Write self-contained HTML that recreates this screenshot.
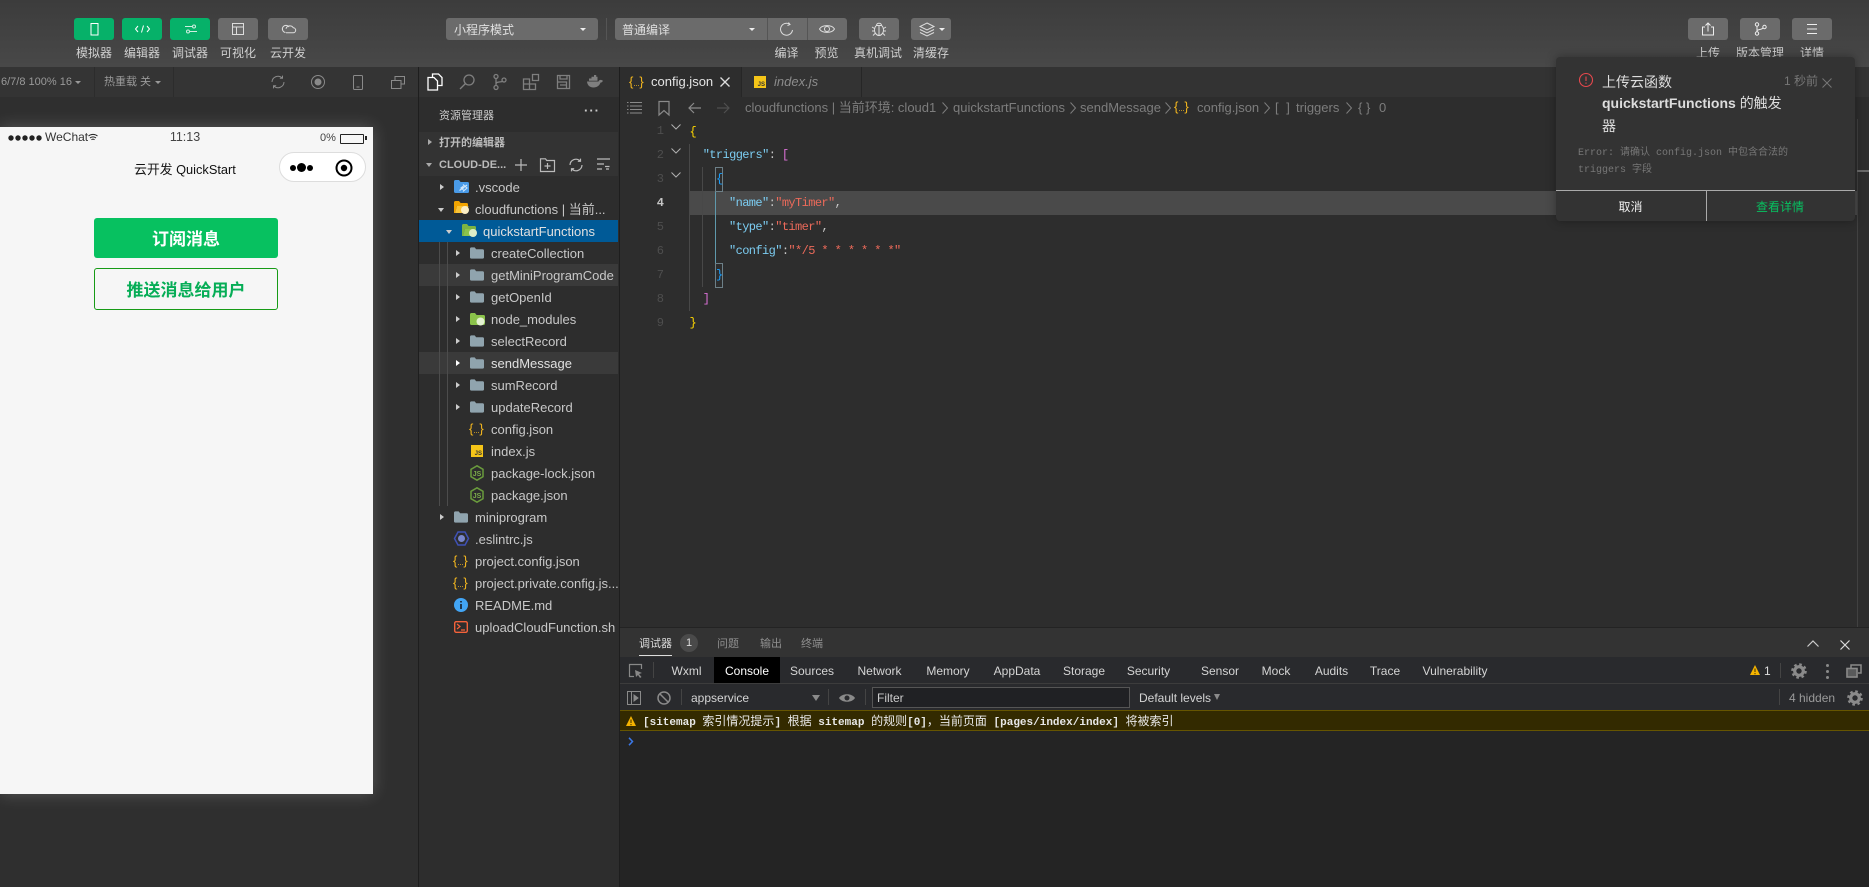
<!DOCTYPE html>
<html lang="zh"><head><meta charset="utf-8"><title>WeChat DevTools</title>
<style>
html,body{margin:0;padding:0;width:1869px;height:887px;overflow:hidden;background:#2f2f2f}
body{position:relative;font-family:"Liberation Sans","Noto Sans CJK SC",sans-serif;font-size:12px;color:#ccc}
.a,.t,.b,svg.i{position:absolute}
.t{white-space:nowrap}
.c{transform:translateX(-50%)}
.lab{top:45px;line-height:16px;color:#d0d0d0;font-size:12px}
.b{top:18px;height:22px;width:40px;border-radius:3px;background:#6b6b6b}
.g{background:#06b169}
.row{position:absolute;left:420px;width:198px;height:22px;line-height:23px;font-size:13px;color:#c8c8c8;white-space:nowrap}
.row span{position:absolute;top:0}
.r,.d{position:absolute;width:0;height:0}
.r{border-left:4px solid #ccc;border-top:3.5px solid transparent;border-bottom:3.5px solid transparent;top:7.5px}
.d{border-top:4px solid #ccc;border-left:3.5px solid transparent;border-right:3.5px solid transparent;top:9.5px}
.sm{border-top-width:3px;border-left-width:3px;border-right-width:3px}
svg.i{overflow:visible;fill:none}
.js{position:absolute;width:13px;height:13px;background:#f5c518;color:#333;font:bold 6px/18px "Liberation Sans",sans-serif;text-align:right;padding-right:1px;box-sizing:border-box}
.cur{position:absolute;color:#f5b81f;font:normal 13px/22px "Liberation Sans",sans-serif}
.cur i{font:normal 8px/22px "Liberation Sans",sans-serif;letter-spacing:-.2px}
.code{position:absolute;font:12px/24px "Liberation Mono",monospace;letter-spacing:-.6px;white-space:pre;height:24px}
.ln{position:absolute;left:640px;width:24px;text-align:right;color:#4e4e4e;font:12px/24px "Liberation Mono",monospace}
.k{color:#7ccdf2}.s{color:#ec6a5a}.w{color:#c8c8c8}
.bc{position:absolute;top:96px;line-height:23px;font-size:13px;color:#7d7d7d;white-space:nowrap}
.dv{position:absolute;top:662px;line-height:18px;font-size:12px;color:#d4d4d4;white-space:nowrap;transform:translateX(-50%)}
.z{font-size:12px;font-weight:normal}
</style></head><body>

<svg width="0" height="0" style="position:absolute"><defs>
<symbol id="fo" viewBox="0 0 15 12"><path d="M0 1.500C0 .6.600 0 1.500 0H5l1.600 2H13.500c.9 0 1.500.6 1.500 1.500v7c0 .9-.6 1.500-1.500 1.500h-12C.6 12 0 11.400 0 10.500z" fill="#90a4ae"/></symbol>
<symbol id="nd" viewBox="0 0 14 16"><path d="M7 .8l6 3.500v7.400l-6 3.500-6-3.500V4.300z" fill="none" stroke="#6a9b3d" stroke-width="1.500"/><text x="7" y="11" font-size="7" font-weight="bold" text-anchor="middle" fill="#7bac4a" font-family="Liberation Sans">JS</text></symbol>
<symbol id="gear" viewBox="0 0 16 16"><circle cx="8" cy="8" r="4.300" fill="none" stroke="#8a8a8a" stroke-width="3.200"/><circle cx="8" cy="8" r="6.600" fill="none" stroke="#8a8a8a" stroke-width="2.400" stroke-dasharray="2.600 2.583"/></symbol>
</defs></svg>

<!-- top toolbar -->
<div class="a" style="left:0;top:0;width:1869px;height:67px;background:linear-gradient(#3c3c3c,#484848)"></div>
<div class="b g" style="left:74px"></div><div class="b g" style="left:122px"></div><div class="b g" style="left:170px"></div>
<div class="b" style="left:218px"></div><div class="b" style="left:268px"></div>
<svg class="i" style="left:88px;top:23px" width="12" height="13"><rect x="3" y=".5" width="7" height="11.500" stroke="#fff"/></svg>
<svg class="i" style="left:134px;top:23px" width="17" height="12" stroke="#fff"><path d="M4 3L1.500 6 4 9M13 3l2.500 3L13 9M9.500 2.500L7.500 9.500"/></svg>
<svg class="i" style="left:184px;top:23px" width="13" height="12" stroke="#cfeee0"><path d="M1 3.500h7M6 8.500h7"/><circle cx="10" cy="3.500" r="1.500"/><circle cx="4" cy="8.500" r="1.500"/></svg>
<svg class="i" style="left:232px;top:23px" width="12" height="12" stroke="#ddd"><path d="M.5.500h11v11H.5zM.5 4h11M4.500 4v7.500"/></svg>
<svg class="i" style="left:281px;top:24px" width="15" height="11" stroke="#ddd"><path d="M4.500 8.500a3.600 3.600 0 1 1 3.500-5.500"/><path d="M5 8.800h7a2.500 2.500 0 0 0 .3-5 4 4 0 0 0-7.300 1"/></svg>
<div class="t lab c" style="left:94px">模拟器</div><div class="t lab c" style="left:142px">编辑器</div><div class="t lab c" style="left:190px">调试器</div><div class="t lab c" style="left:238px">可视化</div><div class="t lab c" style="left:288px">云开发</div>

<div class="a" style="left:446px;top:18px;width:152px;height:22px;border-radius:3px;background:#6b6b6b"></div>
<div class="t" style="left:454px;top:18px;line-height:24px;color:#e0e0e0;font-size:12px">小程序模式</div>
<div class="d sm" style="left:580px;top:28px;border-top-color:#eee"></div>
<div class="a" style="left:606px;top:18px;width:1px;height:22px;background:#555"></div>
<div class="a" style="left:615px;top:18px;width:232px;height:22px;border-radius:3px;background:#6b6b6b"></div>
<div class="a" style="left:767px;top:18px;width:1px;height:22px;background:#555"></div>
<div class="a" style="left:807px;top:18px;width:1px;height:22px;background:#555"></div>
<div class="t" style="left:622px;top:18px;line-height:24px;color:#e0e0e0;font-size:12px">普通编译</div>
<div class="d sm" style="left:749px;top:28px;border-top-color:#eee"></div>
<svg class="i" style="left:779px;top:22px" width="16" height="14" stroke="#ddd"><path d="M10.500 2A6 6 0 1 0 13.500 8M9.500 .5L11 2.500 8.500 3.500"/></svg>
<svg class="i" style="left:819px;top:23px" width="16" height="12" stroke="#ddd"><path d="M.5 6C3 1.500 13 1.500 15.500 6 13 10.500 3 10.500.5 6z"/><circle cx="8" cy="6" r="2.500"/></svg>
<div class="b" style="left:859px"></div><div class="b" style="left:911px"></div>
<svg class="i" style="left:871px;top:21px" width="16" height="16" stroke="#ddd"><path d="M5.500 4.500h5c1.500 1 2 3 2 5s-2 5-4.500 5-4.500-3-4.500-5 .5-4 2-5zM5.500 4.500c0-3 5-3 5 0M8 5v9.500M3.500 7.500L1 6M12.500 7.500L15 6M3.500 10H1M12.500 10H15M4 12.500L2 14.500M12 12.500l2 2"/></svg>
<svg class="i" style="left:919px;top:22px" width="16" height="15" stroke="#ddd"><path d="M8 1l7 3.500L8 8 1 4.500zM1 7.500L8 11l7-3.500M1 10.500L8 14l7-3.500"/></svg>
<div class="d sm" style="left:939px;top:28px;border-top-color:#eee"></div>
<div class="t lab c" style="left:786.500px">编译</div><div class="t lab c" style="left:826.500px">预览</div><div class="t lab c" style="left:878px">真机调试</div><div class="t lab c" style="left:931px">清缓存</div>

<div class="b" style="left:1688px"></div><div class="b" style="left:1740px"></div><div class="b" style="left:1792px"></div>
<svg class="i" style="left:1701px;top:22px" width="14" height="14" stroke="#eee"><path d="M4 5H1.500v8h11V5H10M7 9.500V1M4.500 3.500L7 1l2.500 2.500"/></svg>
<svg class="i" style="left:1754px;top:22px" width="13" height="14" stroke="#eee"><circle cx="3" cy="2.500" r="1.700"/><circle cx="3" cy="11.500" r="1.700"/><circle cx="10.500" cy="5" r="1.700"/><path d="M3 4.200v5.600M3 9c0-2 5-1 6-3"/></svg>
<svg class="i" style="left:1806px;top:24px" width="12" height="10" stroke="#eee"><path d="M1 .5h10M1 5h10M1 9.500h10"/></svg>
<div class="t lab c" style="left:1708px">上传</div><div class="t lab c" style="left:1760px">版本管理</div><div class="t lab c" style="left:1812px">详情</div>

<!-- simulator -->
<div class="a" style="left:0;top:67px;width:418px;height:30px;background:#343434"></div>
<div class="a" style="left:94px;top:67px;width:1px;height:30px;background:#2c2c2c"></div>
<div class="a" style="left:173px;top:67px;width:1px;height:30px;background:#2c2c2c"></div>
<div class="t" style="left:1px;top:67px;line-height:30px;font-size:11px;color:#9a9a9a">6/7/8 100% 16</div>
<div class="d sm" style="left:75px;top:81px;border-top-color:#999"></div>
<div class="t" style="left:104px;top:67px;line-height:30px;font-size:11px;color:#9a9a9a">热重载 关</div>
<div class="d sm" style="left:155px;top:81px;border-top-color:#999"></div>
<svg class="i" style="left:271px;top:75px" width="14" height="14" stroke="#8a8a8a"><path d="M1 7A6 6 0 0 1 11 2.800M13 7A6 6 0 0 1 3 11.200M11.500 .6v2.700H8.800M2.500 13.400v-2.700h2.700"/></svg>
<svg class="i" style="left:311px;top:75px" width="14" height="14" stroke="#8a8a8a"><circle cx="7" cy="7" r="6.500"/><circle cx="7" cy="7" r="3" fill="#8a8a8a"/></svg>
<svg class="i" style="left:353px;top:75px" width="10" height="15" stroke="#8a8a8a"><rect x=".5" y=".5" width="9" height="14" rx="1"/><path d="M3.500 12h3"/></svg>
<svg class="i" style="left:391px;top:76px" width="14" height="13" stroke="#8a8a8a"><path d="M4 4V.5h9.500V8H10M.5 4.500H10V12.500H.5z"/></svg>
<div class="a" style="left:0;top:127px;width:373px;height:667px;background:#f6f6f6;box-shadow:0 0 16px rgba(255,255,255,.2)"></div>
<svg class="i" style="left:8px;top:135px" width="35" height="6" fill="#222" style="fill:#222"><g fill="#222"><circle cx="3" cy="3" r="2.700"/><circle cx="10" cy="3" r="2.700"/><circle cx="17" cy="3" r="2.700"/><circle cx="24" cy="3" r="2.700"/><circle cx="31" cy="3" r="2.700"/></g></svg>
<div class="t" style="left:45px;top:130px;line-height:15px;font-size:12px;color:#333">WeChat</div>
<svg class="i" style="left:88px;top:133px" width="10" height="9"><path d="M.5 3a7 7 0 0 1 9 0M2 5a4.500 4.500 0 0 1 6 0M3.500 6.800a2 2 0 0 1 3 0" stroke="#222"/></svg>
<div class="t c" style="left:185px;top:129px;line-height:17px;font-size:12.500px;color:#444">11:13</div>
<div class="t" style="left:320px;top:131px;line-height:15px;font-size:11px;color:#444">0%</div>
<div class="a" style="left:340px;top:134px;width:22px;height:8px;border:1px solid #222;border-radius:1px"></div>
<div class="a" style="left:365px;top:136px;width:1.500px;height:4px;background:#222"></div>
<div class="t c" style="left:185px;top:161px;line-height:18px;font-size:12.800px;color:#111">云开发 QuickStart</div>
<div class="a" style="left:279px;top:152px;width:87px;height:30px;box-sizing:border-box;background:#fff;border:1px solid #ddd;border-radius:15px"></div>
<div class="a" style="left:290px;top:165px;width:6px;height:6px;background:#000;border-radius:50%"></div>
<div class="a" style="left:297px;top:163px;width:9px;height:9px;background:#000;border-radius:50%"></div>
<div class="a" style="left:307px;top:165px;width:6px;height:6px;background:#000;border-radius:50%"></div>
<svg class="i" style="left:335px;top:159px" width="18" height="18"><circle cx="9" cy="9" r="7.500" stroke="#000" stroke-width="2"/><circle cx="9" cy="9" r="3.200" fill="#000"/></svg>
<div class="a" style="left:94px;top:218px;width:184px;height:40px;background:#07c160;border-radius:3px;color:#fff;font:bold 17px/43px 'Liberation Sans','Noto Sans CJK SC',sans-serif;text-align:center">订阅消息</div>
<div class="a" style="left:94px;top:268px;width:184px;height:42px;box-sizing:border-box;border:1px solid #179b16;border-radius:3px;background:#f6f6f6;color:#06ad56;font:bold 17px/43px 'Liberation Sans','Noto Sans CJK SC',sans-serif;text-align:center">推送消息给用户</div>

<div class="a" style="left:418px;top:67px;width:1px;height:820px;background:#1e1e1e"></div>
<!-- sidebar -->
<div class="a" style="left:419px;top:67px;width:200px;height:820px;background:#2d2d2d"></div>
<div class="a" style="left:419px;top:67px;width:200px;height:30px;background:#333"></div>
<svg class="i" style="left:427px;top:73px" width="16" height="18" stroke="#fff" stroke-width="1.300"><path d="M5.500 4V1h6l3.500 3.500V12.500H11M1 4.500h6l3.500 3.500V17H1z"/></svg>
<svg class="i" style="left:459px;top:74px" width="16" height="16" stroke="#7f7f7f" stroke-width="1.300"><circle cx="10" cy="6" r="5"/><path d="M6.500 9.500L1 15"/></svg>
<svg class="i" style="left:493px;top:74px" width="13" height="16" stroke="#7f7f7f" stroke-width="1.300"><circle cx="3" cy="2.500" r="2"/><circle cx="3" cy="13.500" r="2"/><circle cx="11" cy="6" r="2"/><path d="M3 4.500v7M3 10c0-3 6-1.500 7-3"/></svg>
<svg class="i" style="left:523px;top:74px" width="16" height="16" stroke="#7f7f7f" stroke-width="1.300"><path d="M.5 5h6v5h-6zM.5 10h6v5.500h-6zM6.500 10h6v5.500h-6zM9.500.5h6v6h-6z"/></svg>
<svg class="i" style="left:557px;top:75px" width="13" height="14" stroke="#7f7f7f" stroke-width="1.300"><path d="M.5.500h12v13H.5zM3 .5v3.500h7V.5M.5 7h9v6.500M3 10h6.500"/></svg>
<svg class="i" style="left:587px;top:75px" width="16" height="13"><path d="M0 6.500h11.500c.3-1.300 1.500-2 3-1.500L16 5.800c-.5 1.200-1.500 1.800-2.500 1.800C12.500 10.500 10 12.500 6.500 12.500 2.500 12.500.3 10 0 6.500zM2 3.500h2.500V1.800h2.500V0h2.200v1.800h1.300v4H2z" fill="#7f7f7f"/></svg>
<div class="t" style="left:439px;top:108px;line-height:16px;font-size:11px;color:#ccc">资源管理器</div>
<div class="t c" style="left:592px;top:103px;line-height:16px;font-size:13px;font-weight:bold;color:#ccc;letter-spacing:1px">···</div>
<div class="a" style="left:419px;top:132px;width:199px;height:44px;background:#333"></div>
<div class="r" style="left:428px;top:139px;border-left-color:#aaa"></div>
<div class="t" style="left:439px;top:132px;line-height:22px;font-size:11px;font-weight:bold;color:#bbb">打开的编辑器</div>
<div class="d" style="left:426px;top:163px;border-top-color:#aaa"></div>
<div class="t" style="left:439px;top:154px;line-height:22px;font-size:11px;font-weight:bold;color:#bbb">CLOUD-DE...</div>
<svg class="i" style="left:514px;top:158px" width="14" height="14" stroke="#bbb" stroke-width="1.200"><path d="M7 1v12M1 7h12"/></svg>
<svg class="i" style="left:540px;top:158px" width="15" height="14" stroke="#bbb" stroke-width="1.200"><path d="M.5 2.500V.8h5l1.200 1.700H14.500v11H.5zM7.500 5v6M4.500 8h6"/></svg>
<svg class="i" style="left:569px;top:158px" width="14" height="14" stroke="#bbb" stroke-width="1.200"><path d="M1 7A6 6 0 0 1 11 2.800M13 7A6 6 0 0 1 3 11.200M11.500 .6v2.700H8.800M2.500 13.400v-2.700h2.700"/></svg>
<svg class="i" style="left:597px;top:158px" width="13" height="14" stroke="#bbb" stroke-width="1.200"><path d="M0 1h13M0 6h7M0 11h5M8 8.500h4.500M9 11h3"/></svg>

<div class="a" style="left:419px;top:220px;width:199px;height:22px;background:#005a97"></div>
<div class="a" style="left:419px;top:264px;width:199px;height:22px;background:#3a3a3a"></div>
<div class="a" style="left:419px;top:352px;width:199px;height:22px;background:#3a3a3a"></div>
<div class="a" style="left:439px;top:242px;width:1px;height:264px;background:#4c4c4c"></div>
<div class="a" style="left:447px;top:242px;width:1px;height:264px;background:#4c4c4c"></div>

<div class="row" style="top:176px"><i class="r" style="left:20px"></i>
<svg class="i" style="left:34px;top:3px" width="15" height="16" viewBox="0 0 15 16"><path d="M0 2.500C0 1.700.5 1 1.500 1H5l1.600 2h7c.9 0 1.400.6 1.400 1.500v8c0 .9-.5 1.500-1.400 1.500h-12C.6 14 0 13.400 0 12.500z" fill="#4a9be8"/><path d="M7 9l2-1.500v3zM9 5.500l4 3.500-4 3.500M5.500 11.500L13 6" stroke="#cfe6fb" stroke-width="1.100" fill="none"/></svg><span style="left:55px">.vscode</span></div>
<div class="row" style="top:198px"><i class="d" style="left:18px"></i>
<svg class="i" style="left:34px;top:3px" width="15" height="14" viewBox="0 0 15 14"><path d="M0 1.500C0 .7.500 0 1.500 0H5l1.600 2h6C13.500 2 14 2.600 14 3.500V5H3L1 12H0z" fill="#f2a400"/><path d="M3 5h11.500L12 12H1z" fill="#f9c338"/><circle cx="11" cy="9" r="4" fill="#fbeec4"/></svg><span style="left:55px">cloudfunctions | 当前...</span></div>
<div class="row" style="top:220px;color:#e0e0e0"><i class="d" style="left:26px"></i>
<svg class="i" style="left:42px;top:4px" width="15" height="14" viewBox="0 0 15 14"><path d="M0 1.500C0 .7.500 0 1.500 0H5l1.600 2h6C13.500 2 14 2.600 14 3.500V5H3L1 12H0z" fill="#7cb342"/><path d="M3 5h11L12 12H1z" fill="#8bc34a"/><circle cx="11" cy="9" r="4" fill="#dcedc8"/></svg><span style="left:63px">quickstartFunctions</span></div>
<div class="row" style="top:242px"><i class="r" style="left:36px"></i><svg class="i" style="left:50px;top:5px" width="14" height="12"><use href="#fo"/></svg><span style="left:71px">createCollection</span></div>
<div class="row" style="top:264px"><i class="r" style="left:36px"></i><svg class="i" style="left:50px;top:5px" width="14" height="12"><use href="#fo"/></svg><span style="left:71px">getMiniProgramCode</span></div>
<div class="row" style="top:286px"><i class="r" style="left:36px"></i><svg class="i" style="left:50px;top:5px" width="14" height="12"><use href="#fo"/></svg><span style="left:71px">getOpenId</span></div>
<div class="row" style="top:308px"><i class="r" style="left:36px"></i>
<svg class="i" style="left:50px;top:5px" width="15" height="13" viewBox="0 0 15 13"><path d="M0 1.500C0 .6.600 0 1.500 0H5l1.600 2h6.900c.9 0 1.500.6 1.500 1.500v7c0 .9-.6 1.500-1.500 1.500h-12C.6 12 0 11.400 0 10.500z" fill="#8bc34a"/><circle cx="10.500" cy="8.500" r="4" fill="#e4f2d2"/></svg><span style="left:71px">node_modules</span></div>
<div class="row" style="top:330px"><i class="r" style="left:36px"></i><svg class="i" style="left:50px;top:5px" width="14" height="12"><use href="#fo"/></svg><span style="left:71px">selectRecord</span></div>
<div class="row" style="top:352px;color:#e0e0e0"><i class="r" style="left:36px;border-left-color:#fff"></i><svg class="i" style="left:50px;top:5px" width="14" height="12"><use href="#fo"/></svg><span style="left:71px">sendMessage</span></div>
<div class="row" style="top:374px"><i class="r" style="left:36px"></i><svg class="i" style="left:50px;top:5px" width="14" height="12"><use href="#fo"/></svg><span style="left:71px">sumRecord</span></div>
<div class="row" style="top:396px"><i class="r" style="left:36px"></i><svg class="i" style="left:50px;top:5px" width="14" height="12"><use href="#fo"/></svg><span style="left:71px">updateRecord</span></div>
<div class="row" style="top:418px"><b class="cur" style="left:49px">{<i>...</i>}</b><span style="left:71px">config.json</span></div>
<div class="row" style="top:440px"><div class="js" style="left:51px;top:5px;width:12px;height:12px">JS</div><span style="left:71px">index.js</span></div>
<div class="row" style="top:462px"><svg class="i" style="left:50px;top:3px" width="14" height="16"><use href="#nd"/></svg><span style="left:71px">package-lock.json</span></div>
<div class="row" style="top:484px"><svg class="i" style="left:50px;top:3px" width="14" height="16"><use href="#nd"/></svg><span style="left:71px">package.json</span></div>
<div class="row" style="top:506px"><i class="r" style="left:20px"></i><svg class="i" style="left:34px;top:5px" width="14" height="12"><use href="#fo"/></svg><span style="left:55px">miniprogram</span></div>
<div class="row" style="top:528px"><svg class="i" style="left:34px;top:3px" width="15" height="15" viewBox="0 0 15 15"><path d="M4 1h7l3.500 6.500L11 14H4L.5 7.500z" fill="none" stroke="#3f51b5" stroke-width="1.500"/><circle cx="7.500" cy="7.500" r="3.500" fill="#7986cb"/></svg><span style="left:55px">.eslintrc.js</span></div>
<div class="row" style="top:550px"><b class="cur" style="left:33px">{<i>...</i>}</b><span style="left:55px">project.config.json</span></div>
<div class="row" style="top:572px"><b class="cur" style="left:33px">{<i>...</i>}</b><span style="left:55px">project.private.config.js...</span></div>
<div class="row" style="top:594px"><svg class="i" style="left:34px;top:4px" width="14" height="14"><circle cx="7" cy="7" r="7" fill="#42a5f5"/><path d="M7 3v1.500M7 6v5" stroke="#1a2c40" stroke-width="1.800"/></svg><span style="left:55px">README.md</span></div>
<div class="row" style="top:616px"><svg class="i" style="left:34px;top:5px" width="14" height="12"><rect x=".7" y=".7" width="12.600" height="10.600" rx="1.500" stroke="#f4623a" stroke-width="1.400"/><path d="M3 3l3 2.500L3 8M7 9h4" stroke="#f4623a" stroke-width="1.200"/></svg><span style="left:55px">uploadCloudFunction.sh</span></div>

<div class="a" style="left:619px;top:67px;width:1px;height:820px;background:#1e1e1e"></div>

<!-- editor -->
<div class="a" style="left:620px;top:67px;width:1249px;height:560px;background:#2d2d2d"></div>
<div class="a" style="left:620px;top:67px;width:1249px;height:30px;background:#333"></div>
<div class="a" style="left:620px;top:67px;width:121px;height:30px;background:#2d2d2d"></div>
<div class="a" style="left:741px;top:67px;width:1px;height:30px;background:#262626"></div>
<div class="a" style="left:861px;top:67px;width:1px;height:30px;background:#262626"></div>
<b class="cur" style="left:629px;top:71px">{<i>...</i>}</b>
<div class="t" style="left:651px;top:67px;line-height:30px;font-size:13px;color:#e4e4e4">config.json</div>
<svg class="i" style="left:720px;top:77px" width="10" height="10" stroke="#ddd" stroke-width="1.300"><path d="M.5.500l9 9M9.500.5l-9 9"/></svg>
<div class="js" style="left:754px;top:76px;width:12px;height:12px">JS</div>
<div class="t" style="left:774px;top:67px;line-height:30px;font-size:13px;font-style:italic;color:#8c8c8c">index.js</div>

<svg class="i" style="left:627px;top:102px" width="15" height="12" stroke="#8a8a8a"><path d="M3 .5h12M3 4h12M3 7.500h12M3 11h12M0 .5h1.500M0 4h1.500M0 7.500h1.500M0 11h1.500"/></svg>
<svg class="i" style="left:658px;top:101px" width="12" height="15" stroke="#8a8a8a" stroke-width="1.200"><path d="M1 .5h10v13.500L6 9.500 1 14z"/></svg>
<svg class="i" style="left:688px;top:102px" width="14" height="12" stroke="#8a8a8a" stroke-width="1.200"><path d="M13 6H1M6 1L1 6l5 5"/></svg>
<svg class="i" style="left:716px;top:102px" width="14" height="12" stroke="#4f4f4f" stroke-width="1.200"><path d="M1 6h12M8 1l5 5-5 5"/></svg>
<div class="bc" style="left:745px">cloudfunctions | 当前环境: cloud1</div>
<svg class="i" style="left:942px;top:102px" width="6" height="12" stroke="#7d7d7d"><path d="M.5.500L5.500 6 .5 11.500"/></svg>
<div class="bc" style="left:953px">quickstartFunctions</div>
<svg class="i" style="left:1070px;top:102px" width="6" height="12" stroke="#7d7d7d"><path d="M.5.500L5.500 6 .5 11.500"/></svg>
<div class="bc" style="left:1080px">sendMessage</div>
<svg class="i" style="left:1165px;top:102px" width="6" height="12" stroke="#7d7d7d"><path d="M.5.500L5.500 6 .5 11.500"/></svg>
<b class="cur" style="left:1174px;top:96px">{<i>...</i>}</b>
<div class="bc" style="left:1197px">config.json</div>
<svg class="i" style="left:1264px;top:102px" width="6" height="12" stroke="#7d7d7d"><path d="M.5.500L5.500 6 .5 11.500"/></svg>
<div class="bc" style="left:1275px;letter-spacing:2px">[ ]</div>
<div class="bc" style="left:1296px">triggers</div>
<svg class="i" style="left:1346px;top:102px" width="6" height="12" stroke="#7d7d7d"><path d="M.5.500L5.500 6 .5 11.500"/></svg>
<div class="bc" style="left:1358px">{ }</div>
<div class="bc" style="left:1379px">0</div>

<div class="a" style="left:689px;top:191px;width:1168px;height:24px;background:#4a4a4a"></div>
<div class="a" style="left:1857px;top:119px;width:1px;height:508px;background:#414141"></div>
<div class="a" style="left:1857px;top:170px;width:12px;height:2px;background:#6a6a6a"></div>
<div class="a" style="left:689px;top:144px;width:1px;height:167px;background:#484848"></div>
<div class="a" style="left:702px;top:167px;width:1px;height:120px;background:#484848"></div>
<div class="a" style="left:715px;top:191px;width:1px;height:72px;background:#5f99ac"></div>
<div class="a" style="left:715px;top:167px;width:6px;height:23px;border:1px solid #6d8088"></div>
<div class="a" style="left:715px;top:263px;width:6px;height:23px;border:1px solid #6d8088"></div>

<div class="ln" style="top:119px">1</div><div class="ln" style="top:143px">2</div><div class="ln" style="top:167px">3</div><div class="ln" style="top:191px;color:#c6c6c6;font-weight:bold">4</div><div class="ln" style="top:215px">5</div><div class="ln" style="top:239px">6</div><div class="ln" style="top:263px">7</div><div class="ln" style="top:287px">8</div><div class="ln" style="top:311px">9</div>
<svg class="i" style="left:671px;top:124px" width="10" height="6" stroke="#b0b0b0"><path d="M.5.500L5 5 9.500.5"/></svg>
<svg class="i" style="left:671px;top:148px" width="10" height="6" stroke="#b0b0b0"><path d="M.5.500L5 5 9.500.5"/></svg>
<svg class="i" style="left:671px;top:172px" width="10" height="6" stroke="#b0b0b0"><path d="M.5.500L5 5 9.500.5"/></svg>

<div class="code" style="left:689.500px;top:120px;color:#ffd700">{</div>
<div class="code" style="left:702.700px;top:143px"><span class="k">"triggers"</span><span class="w">: </span><span style="color:#da70d6">[</span></div>
<div class="code" style="left:716px;top:167px;color:#179fff">{</div>
<div class="code" style="left:729px;top:191px"><span class="k">"name"</span><span class="w">:</span><span class="s">"myTimer"</span><span class="w">,</span></div>
<div class="code" style="left:729px;top:215px"><span class="k">"type"</span><span class="w">:</span><span class="s">"timer"</span><span class="w">,</span></div>
<div class="code" style="left:729px;top:239px"><span class="k">"config"</span><span class="w">:</span><span class="s">"*/5 * * * * * *"</span></div>
<div class="code" style="left:716px;top:263px;color:#179fff">}</div>
<div class="code" style="left:702.700px;top:287px;color:#da70d6">]</div>
<div class="code" style="left:689.500px;top:311px;color:#ffd700">}</div>

<!-- bottom debugger -->
<div class="a" style="left:620px;top:627px;width:1249px;height:260px;background:#242424"></div>
<div class="a" style="left:620px;top:627px;width:1249px;height:30px;background:#333;border-top:1px solid #232323;box-sizing:border-box"></div>
<div class="t" style="left:639px;top:636px;line-height:16px;font-size:11px;color:#ddd">调试器</div>
<div class="a" style="left:639px;top:655px;width:33px;height:1px;background:#ddd"></div>
<div class="a" style="left:680px;top:634px;width:18px;height:18px;border-radius:50%;background:#4a4a4a;color:#ddd;font-size:11px;line-height:18px;text-align:center">1</div>
<div class="t" style="left:717px;top:636px;line-height:16px;font-size:11px;color:#8f8f8f">问题</div>
<div class="t" style="left:760px;top:636px;line-height:16px;font-size:11px;color:#8f8f8f">输出</div>
<div class="t" style="left:801px;top:636px;line-height:16px;font-size:11px;color:#8f8f8f">终端</div>
<svg class="i" style="left:1807px;top:640px" width="12" height="8" stroke="#ccc" stroke-width="1.200"><path d="M.5 6.500L6 1l5.500 5.500"/></svg>
<svg class="i" style="left:1840px;top:640px" width="10" height="10" stroke="#ddd" stroke-width="1.200"><path d="M.5.500l9 9M9.500.5l-9 9"/></svg>

<div class="a" style="left:620px;top:657px;width:1249px;height:53px;background:#292a2d"></div>
<div class="a" style="left:620px;top:683px;width:1249px;height:1px;background:#3c3c3c"></div>
<div class="a" style="left:714px;top:657px;width:66px;height:26px;background:#000"></div>
<svg class="i" style="left:629px;top:664px" width="14" height="14" stroke="#888" stroke-width="1.200"><path d="M5 12.500H.5V.5h12V5"/><path d="M6 6l7 3-3 1 2.500 3-1.500 1-2-3-2 2z" fill="#888" stroke="none"/></svg>
<div class="a" style="left:653px;top:662px;width:1px;height:16px;background:#444"></div>
<div class="dv" style="left:686.500px">Wxml</div><div class="dv" style="left:747px;color:#fff">Console</div><div class="dv" style="left:812px">Sources</div><div class="dv" style="left:879.500px">Network</div><div class="dv" style="left:948px">Memory</div><div class="dv" style="left:1017px">AppData</div><div class="dv" style="left:1084px">Storage</div><div class="dv" style="left:1148.500px">Security</div><div class="dv" style="left:1220px">Sensor</div><div class="dv" style="left:1276px">Mock</div><div class="dv" style="left:1331.500px">Audits</div><div class="dv" style="left:1385px">Trace</div><div class="dv" style="left:1455px">Vulnerability</div>
<svg class="i" style="left:1750px;top:665px" width="10" height="10"><path d="M5 0l5 10H0z" fill="#f5b400"/><path d="M5 3.500V7M5 8v1.200" stroke="#3a2d00"/></svg>
<div class="t" style="left:1764px;top:662px;line-height:18px;font-size:12px;color:#ddd">1</div>
<div class="a" style="left:1780px;top:663px;width:1px;height:15px;background:#444"></div>
<svg class="i" style="left:1791px;top:663px" width="16" height="16"><use href="#gear"/></svg>
<div class="a" style="left:1826px;top:664px;width:3px;height:3px;background:#8a8a8a;border-radius:50%"></div><div class="a" style="left:1826px;top:670px;width:3px;height:3px;background:#8a8a8a;border-radius:50%"></div><div class="a" style="left:1826px;top:676px;width:3px;height:3px;background:#8a8a8a;border-radius:50%"></div>
<svg class="i" style="left:1846px;top:664px" width="16" height="14" stroke="#8a8a8a" stroke-width="1.500"><path d="M5 4V1h10v8h-3M1 4.500h10v8.500H1z"/><path d="M1 4.500h10v8.500H1z" fill="#8a8a8a" opacity=".5"/></svg>

<svg class="i" style="left:627px;top:691px" width="14" height="14" stroke="#8a8a8a"><rect x=".5" y=".5" width="13" height="13"/><path d="M4.500.5v13"/><path d="M7 4l4 3-4 3z" fill="#8a8a8a"/></svg>
<svg class="i" style="left:657px;top:691px" width="14" height="14" stroke="#8a8a8a" stroke-width="1.500"><circle cx="7" cy="7" r="6"/><path d="M3 3l8 8"/></svg>
<div class="a" style="left:681px;top:689px;width:1px;height:16px;background:#444"></div>
<div class="t" style="left:691px;top:689px;line-height:18px;font-size:12px;color:#d4d4d4">appservice</div>
<div class="d" style="left:812px;top:695px;border-top:6px solid #8a8a8a;border-left-width:4px;border-right-width:4px"></div>
<div class="a" style="left:828px;top:689px;width:1px;height:16px;background:#444"></div>
<svg class="i" style="left:839px;top:692px" width="16" height="12"><path d="M0 6C3 1 13 1 16 6 13 11 3 11 0 6z" fill="#8a8a8a"/><circle cx="8" cy="6" r="2.500" fill="#292a2d"/></svg>
<div class="a" style="left:865px;top:689px;width:1px;height:16px;background:#444"></div>
<div class="a" style="left:872px;top:687px;width:258px;height:21px;box-sizing:border-box;border:1px solid #555;background:#202124;color:#ccc;font-size:12px;line-height:20px;padding-left:4px">Filter</div>
<div class="t" style="left:1139px;top:689px;line-height:18px;font-size:12px;color:#d4d4d4">Default levels</div>
<div class="d" style="left:1214px;top:694px;border-top:6px solid #8a8a8a;border-left-width:3.500px;border-right-width:3.500px"></div>
<div class="a" style="left:1779px;top:689px;width:1px;height:16px;background:#444"></div>
<div class="t" style="left:1789px;top:689px;line-height:18px;font-size:12px;color:#9a9a9a">4 hidden</div>
<svg class="i" style="left:1847px;top:690px" width="16" height="16"><use href="#gear"/></svg>

<div class="a" style="left:620px;top:710px;width:1249px;height:21px;box-sizing:border-box;background:#332a00;border-top:1px solid #665500;border-bottom:1px solid #665500"></div>
<svg class="i" style="left:626px;top:716px" width="10" height="10"><path d="M5 0l5 10H0z" fill="#f5b400"/><path d="M5 3.500V7M5 8v1.200" stroke="#3a2d00"/></svg>
<div class="t" style="left:643px;top:711px;font:bold 11px/22px 'Liberation Mono','Noto Sans CJK SC',monospace;color:#e8e8e8">[sitemap <span class="z">索引情况提示</span>] <span class="z">根据</span> sitemap <span class="z">的规则</span>[0]<span class="z">，当前页面</span> [pages/index/index] <span class="z">将被索引</span></div>
<svg class="i" style="left:628px;top:737px" width="6" height="9" stroke="#3b78e7" stroke-width="1.500"><path d="M1 .8L4.500 4.500 1 8.200"/></svg>

<!-- notification -->
<div class="a" style="left:1556px;top:57px;width:299px;height:164px;background:#333;border-radius:4px;box-shadow:0 0 10px rgba(0,0,0,.35)"></div>
<svg class="i" style="left:1579px;top:73px" width="14" height="14" stroke="#e5484d" stroke-width="1.100"><circle cx="7" cy="7" r="6.500"/><path d="M7 3.500v4.500M7 9.500v1.300"/></svg>
<div class="t" style="left:1602px;top:71px;line-height:22px;font-size:14px;color:#ddd">上传云函数</div>
<div class="t" style="left:1602px;top:92px;line-height:22px;font-size:14px;font-weight:bold;color:#ddd">quickstartFunctions <span style="font-weight:normal">的触发</span></div>
<div class="t" style="left:1602px;top:115px;line-height:22px;font-size:14px;color:#ddd">器</div>
<div class="t" style="left:1784px;top:72px;line-height:18px;font-size:12px;color:#777">1 秒前</div>
<svg class="i" style="left:1822px;top:78px" width="10" height="10" stroke="#777"><path d="M.5.500l9 9M9.500.5l-9 9"/></svg>
<div class="t" style="left:1578px;top:146px;font:10px/16.500px 'Liberation Mono','Noto Sans CJK SC',monospace;color:#777;white-space:pre">Error: 请确认 config.json 中包含合法的
triggers 字段</div>
<div class="a" style="left:1556px;top:190px;width:299px;height:1px;background:#aaa"></div>
<div class="a" style="left:1706px;top:190px;width:1px;height:31px;background:#aaa"></div>
<div class="t c" style="left:1630.500px;top:198px;line-height:18px;font-size:12px;color:#eee">取消</div>
<div class="t c" style="left:1780px;top:198px;line-height:18px;font-size:12px;color:#07c160">查看详情</div>
</body></html>
